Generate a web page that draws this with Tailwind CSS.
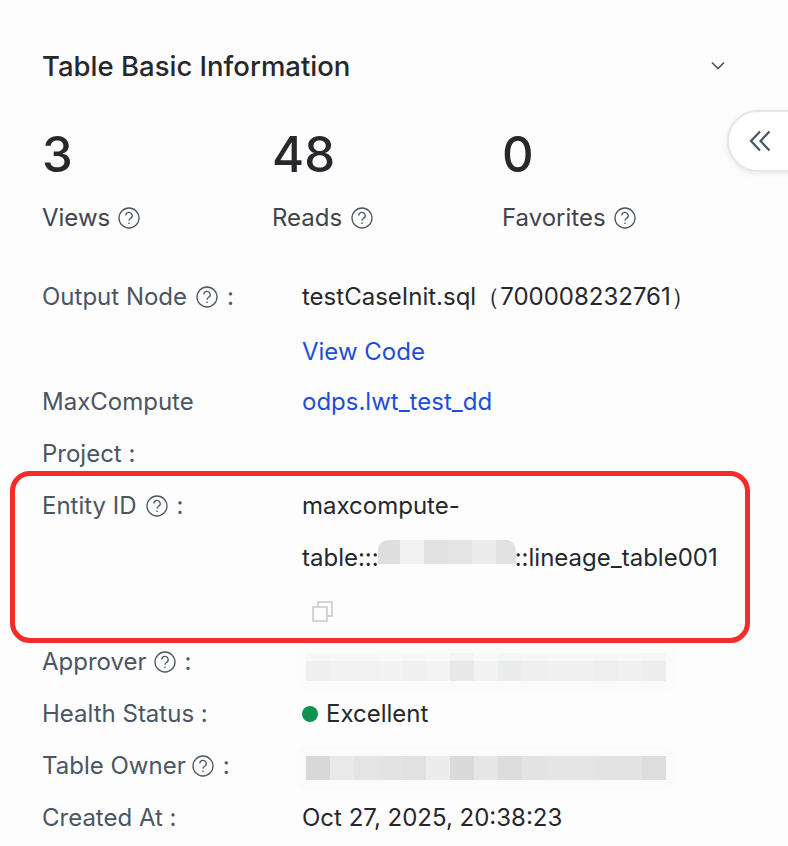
<!DOCTYPE html>
<html lang="en">
<head>
  <meta charset="UTF-8" />
  <title>Table Basic Information</title>
  <script src="https://cdn.jsdelivr.net/npm/@tailwindcss/browser@4"></script>
</head>
<body class="bg-[#fdfdfd] font-['Inter',sans-serif] text-[#27272c] overflow-hidden">
<div class="relative w-[788px] h-[846px] overflow-hidden pl-[42px] pr-[43px] pt-[48px]">

  <!-- header -->
  <div class="flex items-center justify-between h-[36px] pr-[19px]">
    <h2 class="text-[27.5px] leading-[36px] font-medium">Table Basic Information</h2>
    <svg class="w-[16px] h-[10px]" viewBox="0 0 16 10" fill="none" stroke="#4b5563" stroke-width="1.6"><path d="M2 1.5l6 6 6-6"/></svg>
  </div>

  <!-- stats -->
  <div class="grid grid-cols-[230px_230px_1fr] mt-[39px]">
    <div>
      <div class="text-[49px] leading-[64px] font-[550]">3</div>
      <div class="flex items-center gap-[10px] text-[24px] leading-[32px] mt-[15px] text-[#3f444d]">Views
        <svg class="w-[22px] h-[22px] -ml-[2px]" viewBox="0 0 22 22" fill="none" stroke="#4b5563" stroke-width="1.3"><circle cx="11" cy="11" r="10"/><path d="M7.8 8.6a3.2 3.2 0 1 1 4.6 2.9c-1 .5-1.4 1.1-1.4 2.2M11 15.6v1.4"/></svg>
      </div>
    </div>
    <div>
      <div class="text-[49px] leading-[64px] font-[550]">48</div>
      <div class="flex items-center gap-[10px] text-[24px] leading-[32px] mt-[15px] text-[#3f444d]">Reads
        <svg class="w-[22px] h-[22px] -ml-[1px]" viewBox="0 0 22 22" fill="none" stroke="#4b5563" stroke-width="1.3"><circle cx="11" cy="11" r="10"/><path d="M7.8 8.6a3.2 3.2 0 1 1 4.6 2.9c-1 .5-1.4 1.1-1.4 2.2M11 15.6v1.4"/></svg>
      </div>
    </div>
    <div>
      <div class="text-[49px] leading-[64px] font-[550]">0</div>
      <div class="flex items-center gap-[10px] text-[24px] leading-[32px] mt-[15px] text-[#3f444d]">Favorites
        <svg class="w-[22px] h-[22px] -ml-[2px]" viewBox="0 0 22 22" fill="none" stroke="#4b5563" stroke-width="1.3"><circle cx="11" cy="11" r="10"/><path d="M7.8 8.6a3.2 3.2 0 1 1 4.6 2.9c-1 .5-1.4 1.1-1.4 2.2M11 15.6v1.4"/></svg>
      </div>
    </div>
  </div>

  <!-- fields -->
  <div class="grid grid-cols-[260px_1fr] text-[24px] leading-[52px] mt-[37px]">
    <div class="flex items-center gap-[9px] h-[52px] text-[#4b5563]">Output Node
      <svg class="w-[22px] h-[22px]" viewBox="0 0 22 22" fill="none" stroke="#4b5563" stroke-width="1.3"><circle cx="11" cy="11" r="10"/><path d="M7.8 8.6a3.2 3.2 0 1 1 4.6 2.9c-1 .5-1.4 1.1-1.4 2.2M11 15.6v1.4"/></svg>
      <span>:</span>
    </div>
    <div class="h-[52px] whitespace-nowrap">testCaseInit.sql（700008232761）</div>

    <div></div>
    <div class="h-[53px] pt-[3px] text-[#1d4ed8]"><a>View Code</a></div>

    <div class="h-[52px] text-[#4b5563]">MaxCompute</div>
    <div class="h-[52px] text-[#1d4ed8]"><a>odps.lwt_test_dd</a></div>

    <div class="h-[52px] text-[#4b5563]">Project :</div>
    <div class="h-[52px]"></div>

    <div class="flex items-center gap-[9px] h-[52px] text-[#4b5563]">Entity ID
      <svg class="w-[22px] h-[22px]" viewBox="0 0 22 22" fill="none" stroke="#4b5563" stroke-width="1.3"><circle cx="11" cy="11" r="10"/><path d="M7.8 8.6a3.2 3.2 0 1 1 4.6 2.9c-1 .5-1.4 1.1-1.4 2.2M11 15.6v1.4"/></svg>
      <span>:</span>
    </div>
    <div class="whitespace-nowrap">
      <div class="h-[52px]">maxcompute-</div>
      <div class="flex items-center h-[52px]">table:::<span class="flex h-[24px] w-[138px] -ml-[1px] -mt-[12px] rounded-t-[10px] overflow-hidden shrink-0">
        <span class="w-[22px] bg-[#dedede]"></span><span class="w-[24px] bg-[#f1f1f1]"></span><span class="w-[24px] bg-[#e1e1e1]"></span><span class="w-[24px] bg-[#e5e5e5]"></span><span class="w-[24px] bg-[#ececec]"></span><span class="w-[20px] bg-[#e2e2e2]"></span>
      </span><span class="-ml-[1px]">::lineage_table001</span></div>
      <div class="h-[52px] pt-[17px] pl-[10px]">
        <svg class="w-[21px] h-[21px]" viewBox="0 0 21 21" fill="none" stroke="#c8c8c8" stroke-width="1.5"><rect x="1" y="6" width="14" height="14"/><path d="M6 6V1h14v14h-5"/></svg>
      </div>
    </div>

    <div class="flex items-center gap-[9px] h-[52px] text-[#4b5563]">Approver
      <svg class="w-[22px] h-[22px] -ml-[2px]" viewBox="0 0 22 22" fill="none" stroke="#4b5563" stroke-width="1.3"><circle cx="11" cy="11" r="10"/><path d="M7.8 8.6a3.2 3.2 0 1 1 4.6 2.9c-1 .5-1.4 1.1-1.4 2.2M11 15.6v1.4"/></svg>
      <span>:</span>
    </div>
    <div class="h-[52px] flex items-center">
      <div class="relative flex h-[28px] w-[360px] ml-[4px] mt-[10px] rounded-[4px] shadow-[0_0_0_10px_#fbfbfb]">
        <span class="w-[24px] bg-[#efefef]"></span><span class="w-[24px] bg-[#f1f1f1]"></span><span class="w-[24px] bg-[#f1f1f1]"></span><span class="w-[24px] bg-[#f2f2f2]"></span><span class="w-[24px] bg-[#f0f0f0]"></span><span class="w-[24px] bg-[#f3f3f3]"></span><span class="w-[24px] bg-[#e8e8e8]"></span><span class="w-[24px] bg-[#f2f2f2]"></span><span class="w-[24px] bg-[#ebedec]"></span><span class="w-[24px] bg-[#efefef]"></span><span class="w-[24px] bg-[#f0f0f0]"></span><span class="w-[24px] bg-[#f0f0f0]"></span><span class="w-[24px] bg-[#eeeeee]"></span><span class="w-[24px] bg-[#f0f0f0]"></span><span class="w-[24px] bg-[#ededed]"></span>
        <span class="absolute left-0 top-0 w-full h-[8px] bg-white/50"></span>
      </div>
    </div>

    <div class="h-[52px] text-[#4b5563]">Health Status :</div>
    <div class="h-[52px] flex items-center gap-[8px]"><span class="w-[16px] h-[16px] rounded-full bg-[#0e9350]"></span>Excellent</div>

    <div class="flex items-center gap-[9px] h-[52px] text-[#4b5563]">Table Owner
      <svg class="w-[22px] h-[22px] -ml-[3px]" viewBox="0 0 22 22" fill="none" stroke="#4b5563" stroke-width="1.3"><circle cx="11" cy="11" r="10"/><path d="M7.8 8.6a3.2 3.2 0 1 1 4.6 2.9c-1 .5-1.4 1.1-1.4 2.2M11 15.6v1.4"/></svg>
      <span>:</span>
    </div>
    <div class="h-[52px] flex items-center">
      <div class="flex h-[24px] w-[360px] ml-[4px] mt-[4px] rounded-[4px] shadow-[0_0_0_10px_#fbfbfb]">
        <span class="w-[24px] bg-[#d8d8d8]"></span><span class="w-[24px] bg-[#e9e9e9]"></span><span class="w-[24px] bg-[#e4e4e4]"></span><span class="w-[24px] bg-[#e3e3e3]"></span><span class="w-[24px] bg-[#e1e1e1]"></span><span class="w-[24px] bg-[#ececec]"></span><span class="w-[24px] bg-[#dadada]"></span><span class="w-[24px] bg-[#e6e6e6]"></span><span class="w-[24px] bg-[#dcdedd]"></span><span class="w-[24px] bg-[#e3e3e3]"></span><span class="w-[24px] bg-[#e4e4e4]"></span><span class="w-[24px] bg-[#e4e4e4]"></span><span class="w-[24px] bg-[#e3e3e3]"></span><span class="w-[24px] bg-[#e3e3e3]"></span><span class="w-[24px] bg-[#dedede]"></span>
      </div>
    </div>

    <div class="h-[52px] text-[#4b5563]">Created At :</div>
    <div class="h-[52px] whitespace-nowrap">Oct 27, 2025, 20:38:23</div>
  </div>

  <!-- collapse handle -->
  <div class="absolute left-[727px] top-[110px] w-[90px] h-[62px] rounded-l-[31px] bg-white border-2 border-[#e6e6e6] shadow-[0_2px_6px_rgba(0,0,0,0.08)] flex items-center pl-[20px]">
    <svg class="w-[22px] h-[22px]" viewBox="0 0 22 22" fill="none" stroke="#4b5563" stroke-width="2.2"><path d="M11 1.5L2 11l9 9.5M20.5 1.5L11.5 11l9 9.5"/></svg>
  </div>

  <!-- annotation box -->
  <div class="absolute left-[10px] top-[471px] w-[740px] h-[172px] border-[5px] border-[#f52c27] rounded-[20px] pointer-events-none"></div>
</div>
</body>
</html>
